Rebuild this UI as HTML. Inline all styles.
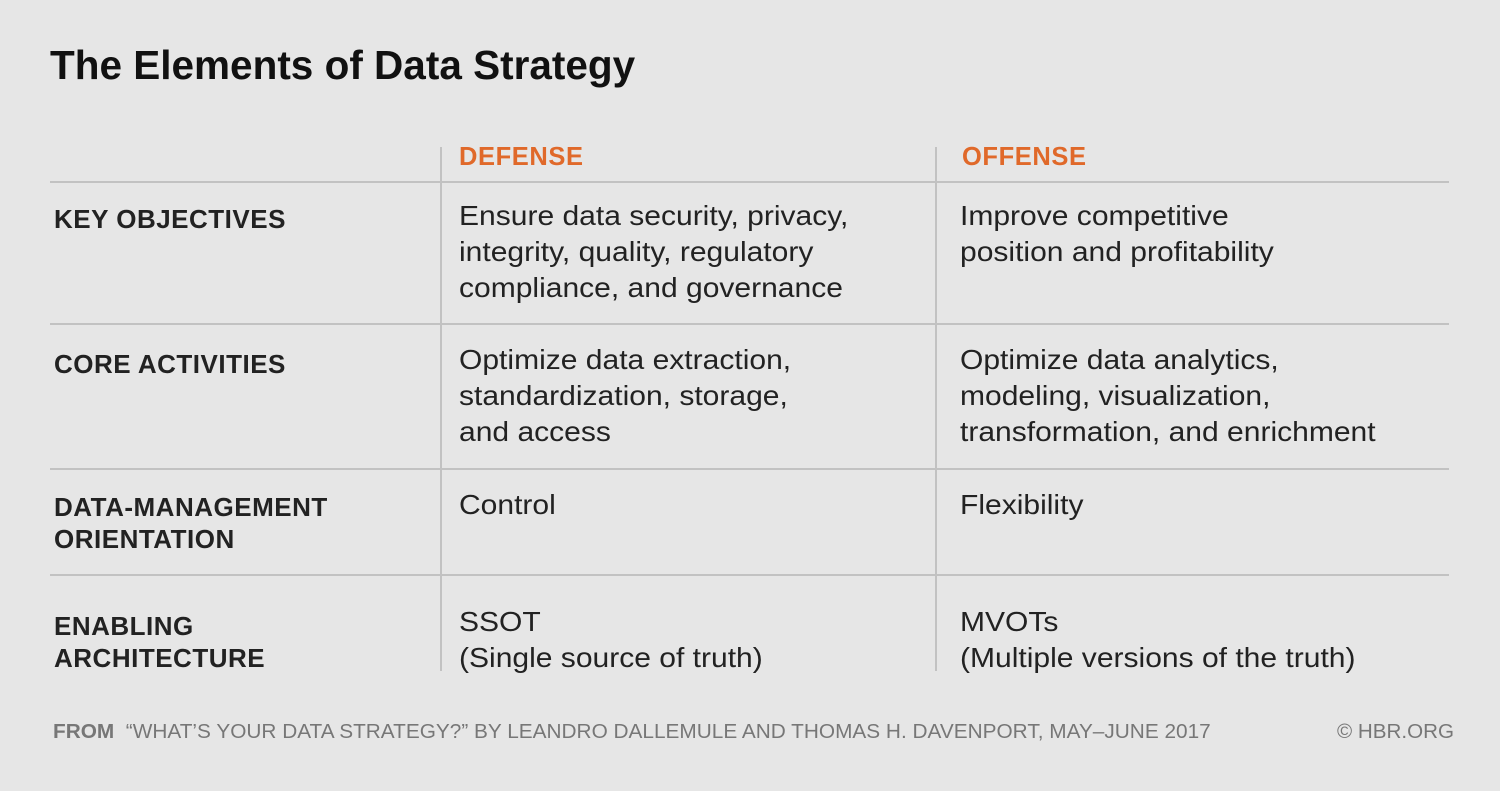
<!DOCTYPE html>
<html><head><meta charset="utf-8"><style>
body{margin:0;width:1500px;height:791px;background:#e6e6e6;position:relative;overflow:hidden;font-family:"Liberation Sans",sans-serif;color:#222}
div{position:absolute;white-space:nowrap}
.t{font-size:27.3px;line-height:36px;transform:scaleX(1.1);transform-origin:left top}
.l{font-size:26px;font-weight:bold;line-height:32px;letter-spacing:0.5px}
.h{font-size:25.5px;font-weight:bold;color:#e0692a;letter-spacing:0.6px}
.hl{left:50px;width:1399px;height:2px;background:#c2c2c2}
.vl{top:147px;height:524px;width:2px;background:#c2c2c2}
</style></head><body>
<div style="left:50px;top:42px;font-size:40.5px;font-weight:bold;color:#111">The Elements of Data Strategy</div>
<div class="vl" style="left:440px"></div>
<div class="vl" style="left:935px"></div>
<div class="h" style="left:459px;top:143px">DEFENSE</div>
<div class="h" style="left:962px;top:143px">OFFENSE</div>
<div class="hl" style="top:181px"></div>
<div class="hl" style="top:323px"></div>
<div class="hl" style="top:468px"></div>
<div class="hl" style="top:574px"></div>
<div class="l" style="left:54px;top:203px">KEY OBJECTIVES</div>
<div class="t" style="left:459px;top:198px">Ensure data security, privacy,<br>integrity, quality, regulatory<br>compliance, and governance</div>
<div class="t" style="left:960px;top:198px">Improve competitive<br>position and profitability</div>
<div class="l" style="left:54px;top:348px">CORE ACTIVITIES</div>
<div class="t" style="left:459px;top:342px">Optimize data extraction,<br>standardization, storage,<br>and access</div>
<div class="t" style="left:960px;top:342px">Optimize data analytics,<br>modeling, visualization,<br>transformation, and enrichment</div>
<div class="l" style="left:54px;top:491px">DATA-MANAGEMENT<br>ORIENTATION</div>
<div class="t" style="left:459px;top:487px">Control</div>
<div class="t" style="left:960px;top:487px">Flexibility</div>
<div class="l" style="left:54px;top:610px">ENABLING<br>ARCHITECTURE</div>
<div class="t" style="left:459px;top:604px">SSOT<br>(Single source of truth)</div>
<div class="t" style="left:960px;top:604px">MVOTs<br>(Multiple versions of the truth)</div>
<div style="left:53px;top:721px;font-size:20px;color:#777;transform:scaleX(1.04);transform-origin:left top"><b>FROM</b>&nbsp;&nbsp;“WHAT’S YOUR DATA STRATEGY?” BY LEANDRO DALLEMULE AND THOMAS H. DAVENPORT, MAY–JUNE 2017</div>
<div style="left:1337px;top:721px;font-size:20px;color:#777;transform:scaleX(1.03);transform-origin:left top">© HBR.ORG</div>
</body></html>
